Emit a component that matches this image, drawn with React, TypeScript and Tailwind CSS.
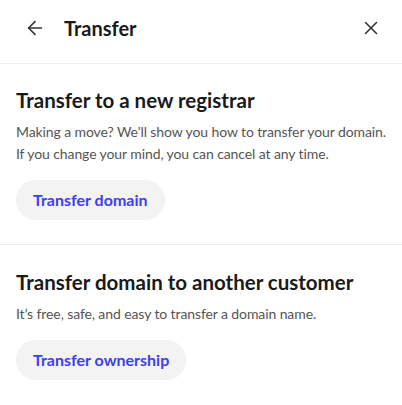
import { ArrowLeft, X } from "lucide-react";

const sections = [
  {
    title: "Transfer to a new registrar",
    body: "Making a move? We’ll show you how to transfer your domain. If you change your mind, you can cancel at any time.",
    action: "Transfer domain",
  },
  {
    title: "Transfer domain to another customer",
    body: "It’s free, safe, and easy to transfer a domain name.",
    action: "Transfer ownership",
  },
];

export default function App() {
  return (
    <div className="w-[402px] h-[405px] bg-white text-[#1a1a1a] font-['Lato',sans-serif] overflow-hidden">
      {/* header */}
      <div className="flex items-center h-[64px] pb-[8px] pl-[24px] pr-[20px] border-b border-[#ececec]">
        <button type="button" className="text-[#333]">
          <ArrowLeft size={22} strokeWidth={1.7} />
        </button>
        <h1 className="ml-[18px] text-[20px] font-bold">Transfer</h1>
        <button type="button" className="ml-auto text-[#333]">
          <X size={22} strokeWidth={1.7} />
        </button>
      </div>

      {sections.map((s, i) => (
        <div
          key={s.title}
          className={
            i === 0
              ? "pl-4 pr-2 pt-[22px] pb-[24px] border-b border-[#ececec]"
              : "pl-4 pr-2 pt-[23px] pb-6"
          }
        >
          <h2 className="text-[20.5px] font-bold leading-[28px]">{s.title}</h2>
          <p className="mt-[7px] text-[14px] leading-[22px] tracking-[-0.1px] text-[#555]">{s.body}</p>
          <button
            type="button"
            className="mt-[15px] h-[40px] px-[17px] rounded-full bg-[#f3f3f3] text-[16px] font-bold text-[#3d3df2]"
          >
            {s.action}
          </button>
        </div>
      ))}
    </div>
  );
}
